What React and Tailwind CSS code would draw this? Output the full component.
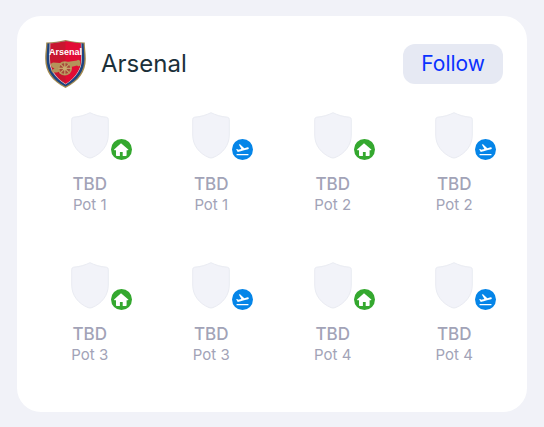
import React from 'react';
import { MdFlightTakeoff } from 'react-icons/md';

const fixtures = [
  { id: 1, team: 'TBD', pot: 'Pot 1', home: true },
  { id: 2, team: 'TBD', pot: 'Pot 1', home: false },
  { id: 3, team: 'TBD', pot: 'Pot 2', home: true },
  { id: 4, team: 'TBD', pot: 'Pot 2', home: false },
  { id: 5, team: 'TBD', pot: 'Pot 3', home: true },
  { id: 6, team: 'TBD', pot: 'Pot 3', home: false },
  { id: 7, team: 'TBD', pot: 'Pot 4', home: true },
  { id: 8, team: 'TBD', pot: 'Pot 4', home: false },
];

const Crest = () => (
  <svg viewBox="0 0 42 50" className="w-[42px] h-[50px]" role="img" aria-label="Arsenal crest">
    <defs>
      <clipPath id="crest-field">
        <path d="M2.4 4.6C9 4.2 14 3.5 20.5 2.2C27 3.5 32 4.2 38.6 4.6C38.6 9 39.4 14 39.4 20C39.4 32 33 41 20.5 47.6C8 41 1.6 32 1.6 20C1.6 14 2.4 9 2.4 4.6Z" />
      </clipPath>
    </defs>
    <path d="M1.2 3.4C9 3.2 14 2.4 20.5 1C27 2.4 32 3.2 39.8 3.4C39.8 9 40.8 13 40.8 20C40.8 33 34 42 20.5 49C7 42 0.2 33 0.2 20C0.2 13 1.2 9 1.2 3.4Z" fill="#a38a50" />
    <g clipPath="url(#crest-field)">
      <path d="M0 0H42V50H0Z" fill="#1c4480" />
      <path d="M4.4 0H36.6C36.2 8 36.8 13 36.8 20C36.8 30 32 38 20.5 45.6C9 38 4.2 30 4.2 20C4.2 13 4.8 8 4.4 0Z" fill="#e9c9cc" />
      <path d="M5.2 0H35.8C35.4 8 36 13 36 20C36 30 31 38 20.5 44.8C10 38 5 30 5 20C5 13 5.6 8 5.2 0Z" fill="#c8162f" />
      <path d="M20.5 0H35.8C35.4 8 36 13 36 20C36 30 31 38 20.5 44.8Z" fill="#e20c34" />
    </g>
    {/* Cannon */}
    <path d="M5.5 25L8 23.4L15 24L32 21.6L33 20.8L35.2 21.8L35.2 26.6L33.6 27.4L32 26.4L26 28L12 33.5L7.5 33.5L6 31.5L9.5 29.5L6.5 28Z" fill="#b4945a" />
    <circle cx="19.8" cy="29.4" r="7.2" fill="#b4945a" />
    <circle cx="19.8" cy="29.4" r="5.4" fill="#a6493a" />
    <path d="M19.8 23V35.8M13.4 29.4H26.2M15.3 24.9L24.3 33.9M24.3 24.9L15.3 33.9" stroke="#c4a368" strokeWidth="1.2" />
    <circle cx="19.8" cy="29.4" r="2" fill="#c9aa70" />
    <text x="20.5" y="16" textAnchor="middle" fill="#fff" className="font-['Liberation_Sans',sans-serif] font-bold text-[9px]">Arsenal</text>
  </svg>
);

const Shield = () => (
  <svg viewBox="0 0 38 47" className="w-[38px] h-[47px]" aria-hidden="true">
    <path d="M19 0.7C24 3.2 29 4.6 35.3 5.2Q37.3 5.5 37.3 7.5V23C37.3 33 31 41.5 21 45.6Q19 46.4 17 45.6C7 41.5 0.7 33 0.7 23V7.5Q0.7 5.5 2.7 5.2C9 4.6 14 3.2 19 0.7Z" fill="#f2f3f9" stroke="#e9ebf2" />
  </svg>
);

const HomeIcon = () => (
  <svg viewBox="0 0 21 21" className="size-[21px]" fill="currentColor" aria-hidden="true">
    <path d="M10 4.3L17.3 10.4Q17.6 11.2 16.8 11.2H15.6V16.3Q15.6 17 14.9 17H11.7V13H8.9V17H5.7Q5 17 5 16.3V11.2H3.6Q2.8 11.2 3.1 10.4Z" />
  </svg>
);

const Fixture = ({ team, pot, home }) => (
  <li className="flex flex-col items-center">
    <div className="relative">
      <Shield />
      {home ? (
        <span className="absolute left-10 top-[27px] flex items-center justify-center size-[21px] rounded-full bg-[#34a82f] text-white">
          <HomeIcon />
        </span>
      ) : (
        <span className="absolute left-10 top-[27px] flex items-center justify-center size-[21px] rounded-full bg-[#0585e8] text-white">
          <MdFlightTakeoff size={15} />
        </span>
      )}
    </div>
    <p className="mt-[13px] text-[17px] leading-6 font-medium text-[#a2a3b7]">{team}</p>
    <p className="text-[15px] leading-[18px] text-[#a2a3b7]">{pot}</p>
  </li>
);

const App = () => {
  return (
    <div className="min-h-screen bg-[#f1f2f8] px-[17px] pt-4 pb-[15px] font-['Inter',sans-serif]">
      <section className="bg-white rounded-3xl px-3 pt-[23px] pb-12">
        {/* Team header */}
        <header className="flex items-center justify-between pl-4 pr-3">
          <div className="flex items-center gap-[14px]">
            <Crest />
            <h1 className="text-2xl text-[#1b303a]">Arsenal</h1>
          </div>
          <button className="h-10 px-[18px] rounded-xl bg-[#e6e9f3] text-[21px] text-[#0a32ff]">Follow</button>
        </header>

        {/* Opponents by pot */}
        <ul className="mt-[23px] grid grid-cols-4 gap-y-12">
          {fixtures.map((f) => (
            <Fixture key={f.id} team={f.team} pot={f.pot} home={f.home} />
          ))}
        </ul>
      </section>
    </div>
  );
};

export default App;
